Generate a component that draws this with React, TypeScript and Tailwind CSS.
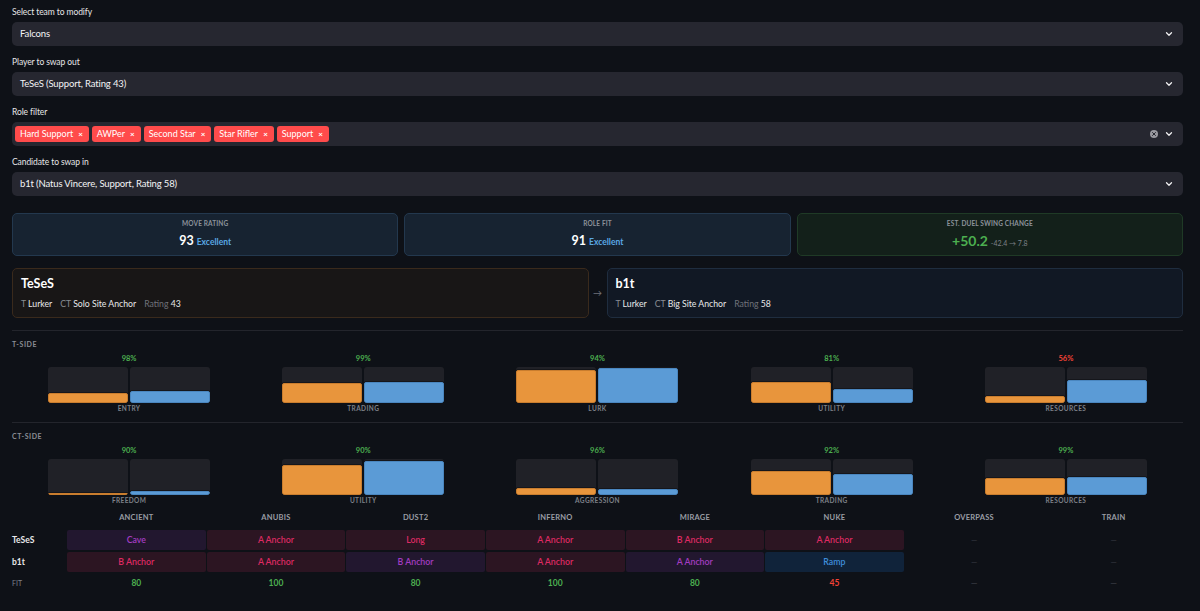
import { ChevronDown, X } from "lucide-react";

const font = { fontFamily: "Lato, 'Noto Sans', sans-serif" };

type Bar = { label: string; pct: number; good: boolean; a: number; b: number };

const tSide: Bar[] = [
  { label: "ENTRY", pct: 98, good: true, a: 10, b: 12 },
  { label: "TRADING", pct: 99, good: true, a: 20, b: 21 },
  { label: "LURK", pct: 94, good: true, a: 33, b: 35 },
  { label: "UTILITY", pct: 81, good: true, a: 21, b: 14 },
  { label: "RESOURCES", pct: 56, good: false, a: 7, b: 23 },
];

const ctSide: Bar[] = [
  { label: "FREEDOM", pct: 90, good: true, a: 2, b: 4 },
  { label: "UTILITY", pct: 90, good: true, a: 30, b: 34 },
  { label: "AGGRESSION", pct: 96, good: true, a: 7, b: 6 },
  { label: "TRADING", pct: 92, good: true, a: 24, b: 21 },
  { label: "RESOURCES", pct: 99, good: true, a: 17, b: 18 },
];

type Cell = { text: string; tone: "purple" | "red" | "blue" } | null;

const maps = ["ANCIENT", "ANUBIS", "DUST2", "INFERNO", "MIRAGE", "NUKE", "OVERPASS", "TRAIN"];

const rowA: Cell[] = [
  { text: "Cave", tone: "purple" },
  { text: "A Anchor", tone: "red" },
  { text: "Long", tone: "red" },
  { text: "A Anchor", tone: "red" },
  { text: "B Anchor", tone: "red" },
  { text: "A Anchor", tone: "red" },
  null,
  null,
];

const rowB: Cell[] = [
  { text: "B Anchor", tone: "red" },
  { text: "A Anchor", tone: "red" },
  { text: "B Anchor", tone: "purple" },
  { text: "A Anchor", tone: "red" },
  { text: "A Anchor", tone: "purple" },
  { text: "Ramp", tone: "blue" },
  null,
  null,
];

const fits: (number | null)[] = [80, 100, 80, 100, 80, 45, null, null];

const toneClass = {
  purple: "bg-[#22172f] text-[#a43cc2]",
  red: "bg-[#2c1522] text-[#df2a62]",
  blue: "bg-[#10233a] text-[#3f8ddc]",
};

function Field({ label, children, clear }: { label: string; children: React.ReactNode; clear?: boolean }) {
  return (
    <div>
      <div className="h-[12px] mb-[4px] text-[8.5px] leading-[12px] tracking-[-0.01em] text-[#e6e6e8]">{label}</div>
      <div className="h-[24px] rounded-[5px] bg-[#262730] pl-[8px] pr-[9px] flex items-center justify-between">
        <div className="flex items-center gap-[3px] text-[9.5px] tracking-[-0.015em] text-[#f4f4f6]">{children}</div>
        <div className="flex items-center gap-[6px]">
          {clear && (
            <div className="w-[8px] h-[8px] rounded-full bg-[#9a9aa0] flex items-center justify-center">
              <X size={6} strokeWidth={4} color="#262730" />
            </div>
          )}
          <ChevronDown size={10} strokeWidth={3} color="#f0f0f2" />
        </div>
      </div>
    </div>
  );
}

function Tag({ name }: { name: string }) {
  return (
    <span className="h-[16px] rounded-[3px] bg-[#ff4b4b] pl-[5px] pr-[6px] flex items-center gap-[5px] text-[9px] tracking-normal text-white">
      {name}
      <span className="text-[8px] font-bold leading-none">×</span>
    </span>
  );
}

function Metric({ title, children, green }: { title: string; children: React.ReactNode; green?: boolean }) {
  return (
    <div
      className={
        "rounded-[5px] border flex flex-col items-center pt-[5px] pb-[6px] " +
        (green ? "bg-[#13201a] border-[#1f3a26]" : "bg-[#172331] border-[#23384e]")
      }
    >
      <div className="h-[10px] text-[6.5px] leading-[10px] font-bold tracking-[0.02em] text-[#8c929b]">{title}</div>
      <div className="mt-[4px] h-[16px] flex items-baseline gap-[3px] leading-[16px]">{children}</div>
    </div>
  );
}

function Player({ name, t, ct, rating, warm }: { name: string; t: string; ct: string; rating: number; warm?: boolean }) {
  return (
    <div
      className={
        "rounded-[5px] border px-[8px] pt-[7px] pb-[7px] " +
        (warm ? "bg-[#181616] border-[#3a2a1c]" : "bg-[#111824] border-[#1f2d3f]")
      }
    >
      <div className="h-[16px] text-[12.5px] leading-[16px] font-bold text-white">{name}</div>
      <div className="mt-[6px] h-[12px] text-[8.7px] leading-[12px] flex gap-[8px]">
        <span>
          <span className="text-[#8a8d93]">T </span>
          <span className="text-[#e8e8ea]">{t}</span>
        </span>
        <span>
          <span className="text-[#8a8d93]">CT </span>
          <span className="text-[#e8e8ea]">{ct}</span>
        </span>
        <span>
          <span className="text-[#6f727a]">Rating </span>
          <span className="text-[#e8e8ea]">{rating}</span>
        </span>
      </div>
    </div>
  );
}

function Track({ h, orange }: { h: number; orange: boolean }) {
  return (
    <div className="w-[80px] h-[36px] rounded-[3px] bg-[#202127] flex flex-col justify-end overflow-hidden">
      <div
        className={
          "w-full rounded-[2px] border shadow-[0_-1px_0_#15161b] " +
          (orange ? "bg-[#e8953c] border-[#c97d2e]" : "bg-[#5b9bd6] border-[#4a86bf]")
        }
        style={{ height: h }}
      />
    </div>
  );
}

function Side({ title, bars }: { title: string; bars: Bar[] }) {
  return (
    <div>
      <div className="h-[10px] text-[7px] leading-[10px] font-bold tracking-[0.08em] text-[#8a8d93]">{title}</div>
      <div className="mt-[5px] grid grid-cols-5">
        {bars.map((b, i) => (
          <div key={i} className="flex flex-col items-center">
            <div
              className={
                "h-[10px] text-[7.5px] leading-[10px] font-bold " + (b.good ? "text-[#4caf50]" : "text-[#f44336]")
              }
            >
              {b.pct}%
            </div>
            <div className="mt-[3px] flex gap-[2px]">
              <Track h={b.a} orange />
              <Track h={b.b} orange={false} />
            </div>
            <div className="mt-[1px] h-[10px] text-[6.5px] leading-[10px] font-bold tracking-[0.06em] text-[#7d8088]">
              {b.label}
            </div>
          </div>
        ))}
      </div>
    </div>
  );
}

function MapRow({ name, cells }: { name: string; cells: Cell[] }) {
  return (
    <>
      <div className="h-[20px] flex items-center text-[8.5px] font-bold text-[#e8e8ea]">{name}</div>
      {cells.map((c, i) =>
        c ? (
          <div
            key={i}
            className={"h-[20px] rounded-[2px] flex items-center justify-center text-[8.8px] font-semibold " + toneClass[c.tone]}
          >
            {c.text}
          </div>
        ) : (
          <div key={i} className="h-[20px] flex items-center justify-center text-[8px] text-[#3c3f46]">
            —
          </div>
        )
      )}
    </>
  );
}

export default function App() {
  return (
    <div className="min-h-screen w-full bg-[#0e1117] pl-[12px] pr-[17px] pt-[6px] pb-[20px]" style={font}>
      <div className="flex flex-col gap-[10px]">
        <Field label="Select team to modify">Falcons</Field>
        <Field label="Player to swap out">TeSeS (Support, Rating 43)</Field>
        <Field label="Role filter" clear>
          <div className="-ml-[5px] flex gap-[3px]">
            {["Hard Support", "AWPer", "Second Star", "Star Rifler", "Support"].map((n) => (
              <Tag key={n} name={n} />
            ))}
          </div>
        </Field>
        <Field label="Candidate to swap in">b1t (Natus Vincere, Support, Rating 58)</Field>
      </div>

      <div className="mt-[17px] grid grid-cols-3 gap-[6px]">
        <Metric title="MOVE RATING">
          <span className="text-[12.5px] font-bold text-white">93</span>
          <span className="text-[8.5px] font-bold text-[#5aa8e4]">Excellent</span>
        </Metric>
        <Metric title="ROLE FIT">
          <span className="text-[12.5px] font-bold text-white">91</span>
          <span className="text-[8.5px] font-bold text-[#5aa8e4]">Excellent</span>
        </Metric>
        <Metric title="EST. DUEL SWING CHANGE" green>
          <span className="text-[14px] font-bold text-[#4caf50]">+50.2</span>
          <span className="text-[7px] text-[#7d8088]">-42.4 → 7.8</span>
        </Metric>
      </div>

      <div className="mt-[12px] grid grid-cols-[1fr_18px_1fr]">
        <Player name="TeSeS" t="Lurker" ct="Solo Site Anchor" rating={43} warm />
        <div className="flex items-center justify-center text-[9px] text-[#6f727a]">→</div>
        <Player name="b1t" t="Lurker" ct="Big Site Anchor" rating={58} />
      </div>

      <div className="mt-[12px] h-px bg-[#23252c]" />
      <div className="mt-[8px]">
        <Side title="T-SIDE" bars={tSide} />
      </div>
      <div className="mt-[8px] h-px bg-[#23252c]" />
      <div className="mt-[8px]">
        <Side title="CT-SIDE" bars={ctSide} />
      </div>

      <div className="mt-[7px] grid grid-cols-[54px_repeat(8,1fr)] gap-x-[1px] gap-y-[2px]">
        <div className="h-[10px]" />
        {maps.map((m) => (
          <div key={m} className="h-[10px] text-center text-[7.5px] leading-[10px] font-bold tracking-[0.03em] text-[#9a9da4]">
            {m}
          </div>
        ))}
        <div className="col-span-9 h-[3px]" />
        <MapRow name="TeSeS" cells={rowA} />
        <MapRow name="b1t" cells={rowB} />
        <div className="col-span-9 h-[2px]" />
        <div className="h-[10px] text-[7px] leading-[10px] text-[#7d8088]">FIT</div>
        {fits.map((f, i) => (
          <div
            key={i}
            className={
              "h-[10px] text-center text-[8.5px] leading-[10px] font-bold " +
              (f === null ? "text-[#3c3f46] font-normal" : f >= 60 ? "text-[#4caf50]" : "text-[#f44336]")
            }
          >
            {f === null ? "—" : f}
          </div>
        ))}
      </div>
    </div>
  );
}
